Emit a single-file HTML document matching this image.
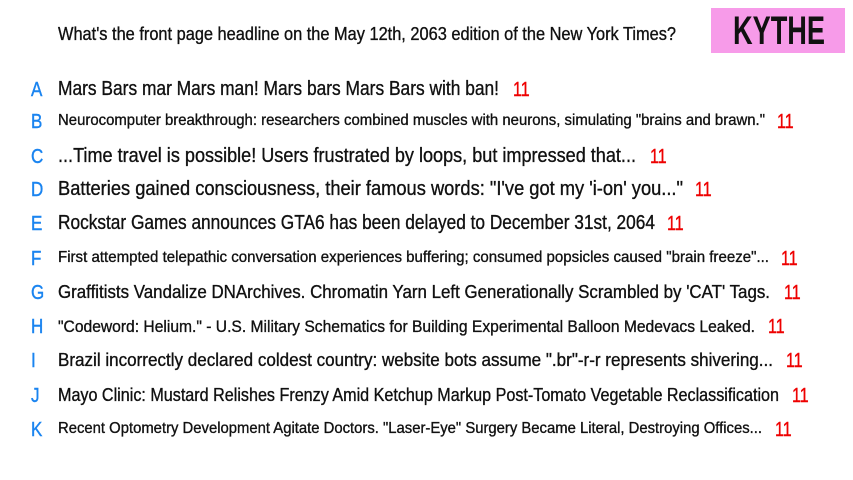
<!DOCTYPE html>
<html><head><meta charset="utf-8"><style>
body{margin:0;width:853px;height:480px;background:#fff;overflow:hidden;position:relative;font-family:"Liberation Sans Narrow","Liberation Sans",sans-serif;color:#111}
.t{position:absolute;white-space:nowrap;transform-origin:0 50%;line-height:1;-webkit-text-stroke:0.35px #111}
.l{position:absolute;left:31px;color:#1a84f0;font-size:20px;line-height:1;transform:scaleX(.85);transform-origin:0 50%;-webkit-text-stroke:0.4px #1a84f0}
.n{position:absolute;color:#e00;font-size:20px;line-height:1;transform:scaleX(.8);transform-origin:0 50%;-webkit-text-stroke:0.4px #e00}
#box{position:absolute;left:711px;top:8px;width:134px;height:45px;background:#f79be9}
</style></head><body>
<div class="t" data-w="618" style="left:58px;top:25px;font-size:18px">What's the front page headline on the May 12th, 2063 edition of the New York Times?</div>
<div id="box"></div>
<div class="t" data-w="92" style="left:733px;top:11px;font-size:40px;font-weight:bold;-webkit-text-stroke:0">KYTHE</div>
<script>
var rows=[
["A",89,20,499,513,"Mars Bars mar Mars man! Mars bars Mars Bars with ban!"],
["B",121,16,765,777,"Neurocomputer breakthrough: researchers combined muscles with neurons, simulating \"brains and brawn.\""],
["C",156,20,636,650,"...Time travel is possible! Users frustrated by loops, but impressed that..."],
["D",189,20,683,695,"Batteries gained consciousness, their famous words: \"I've got my 'i-on' you...\""],
["E",223,20,655,667,"Rockstar Games announces GTA6 has been delayed to December 31st, 2064"],
["F",258,16,769,781,"First attempted telepathic conversation experiences buffering; consumed popsicles caused \"brain freeze\"..."],
["G",292,18,770,784,"Graffitists Vandalize DNArchives. Chromatin Yarn Left Generationally Scrambled by 'CAT' Tags."],
["H",326,17,755,768,"\"Codeword: Helium.\" - U.S. Military Schematics for Building Experimental Balloon Medevacs Leaked."],
["I",360,18,773,786,"Brazil incorrectly declared coldest country: website bots assume \".br\"-r-r represents shivering..."],
["J",395,18,779,792,"Mayo Clinic: Mustard Relishes Frenzy Amid Ketchup Markup Post-Tomato Vegetable Reclassification"],
["K",429,16,762,775,"Recent Optometry Development Agitate Doctors. \"Laser-Eye\" Surgery Became Literal, Destroying Offices..."]];
var h="";
rows.forEach(function(r){
h+='<div class="l" style="top:'+(r[1]-9)+'px">'+r[0]+'</div>';
var d=document.createElement('div');d.className='t';d.textContent=r[5];
d.setAttribute('data-w',r[3]-58);d.style.left='58px';d.style.top=(r[1]-r[2]*0.5)+'px';d.style.fontSize=r[2]+'px';
document.body.appendChild(d);
h+='<div class="n" style="left:'+r[4]+'px;top:'+(r[1]-9)+'px">11</div>';
});
document.body.insertAdjacentHTML('beforeend',h);
document.querySelectorAll('.t').forEach(function(e){var w=+e.getAttribute('data-w');var s=w/e.getBoundingClientRect().width;e.style.transform='scaleX('+s+')';});
</script>
</body></html>
